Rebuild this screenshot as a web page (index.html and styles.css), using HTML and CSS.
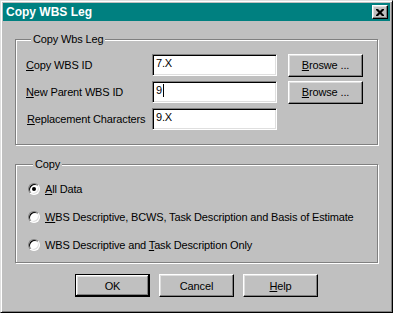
FILE: index.html
```html
<!DOCTYPE html>
<html>
    <head>
        <meta charset='utf-8'/>
        <link rel="stylesheet" href="styles.css">
    </head>
    <body>
        <div class='window'>
            <div class='titlebar'>
                <span class='title'>Copy WBS Leg</span>
                <span class='close'>
                    <svg width='8' height='7' viewBox='0 0 8 7'>
                        <path d='M0 0h2l2 2 2-2h2v1l-2.5 2.5 2.5 2.5v1h-2l-2-2-2 2h-2v-1l2.5-2.5-2.5-2.5z' fill='#000'/>
                    </svg>
                </span>
            </div>
            <div class='content'>
                <fieldset class='group group-leg'>
                    <legend>Copy Wbs Leg</legend>
                    <div class='row'>
                        <span class='field-label'><u>C</u>opy WBS ID</span>
                        <div class='textbox'>7.X</div>
                        <button class='btn'><u>B</u>roswe ...</button>
                    </div>
                    <div class='row'>
                        <span class='field-label'><u>N</u>ew Parent WBS ID</span>
                        <div class='textbox'>9<span class='caret'></span></div>
                        <button class='btn'><u>B</u>rowse ...</button>
                    </div>
                    <div class='row'>
                        <span class='field-label indent'><u>R</u>eplacement Characters</span>
                        <div class='textbox'>9.X</div>
                    </div>
                </fieldset>
                <fieldset class='group group-copy'>
                    <legend>Copy</legend>
                    <div class='option'>
                        <span class='radio checked'></span>
                        <span><u>A</u>ll Data</span>
                    </div>
                    <div class='option'>
                        <span class='radio'></span>
                        <span><u>W</u>BS Descriptive, BCWS, Task Description and Basis of Estimate</span>
                    </div>
                    <div class='option'>
                        <span class='radio'></span>
                        <span>WBS Descriptive and <u>T</u>ask Description Only</span>
                    </div>
                </fieldset>
                <div class='actions'>
                    <button class='btn btn-default'>OK</button>
                    <button class='btn'>Cancel</button>
                    <button class='btn'><u>H</u>elp</button>
                </div>
            </div>
        </div>
    </body>
</html>
```

FILE: styles.css
```css
body{
    margin:0;
    padding:0;
    font-family:"Liberation Sans", Arial, sans-serif;
    font-size:11px;
    letter-spacing:-0.15px;
    color:#000;
}
.window{
    width:393px;
    height:313px;
    box-sizing:border-box;
    background-color:#c0c0c0;
    border:1px solid;
    border-color:#dfdfdf #000 #000 #dfdfdf;
    box-shadow:inset 1px 1px #fff, inset -1px -1px #808080;
    padding:2px;
}
.titlebar{
    height:18px;
    background-color:#008080;
    display:flex;
    align-items:center;
    justify-content:space-between;
    padding:0 2px 0 3px;
}
.title{
    color:#fff;
    font-weight:bold;
    font-size:12px;
    letter-spacing:0;
}
.close{
    width:16px;
    height:14px;
    box-sizing:border-box;
    background-color:#c0c0c0;
    border:1px solid;
    border-color:#fff #000 #000 #fff;
    box-shadow:inset -1px -1px #808080, inset 1px 1px #dfdfdf;
    display:flex;
    align-items:center;
    justify-content:center;
}
.content{
    padding:12px 12px 0 12px;
}
.group{
    margin:0;
    border:1px solid #808080;
    box-shadow:inset 1px 1px #fff, 1px 1px #fff;
}
.group legend{
    background-color:#c0c0c0;
    padding:0 2px;
    margin-left:5px;
    line-height:13px;
}
.group-leg{
    padding:8px 13px 14px 10px;
    display:flex;
    flex-direction:column;
    gap:5px;
}
.row{
    display:flex;
    align-items:center;
    height:22px;
}
.field-label{
    width:126px;
}
.field-label.indent{
    padding-left:1px;
    width:125px;
}
.textbox{
    width:125px;
    height:22px;
    box-sizing:border-box;
    background-color:#fff;
    border:1px solid;
    border-color:#808080 #fff #fff #808080;
    box-shadow:inset 1px 1px #000, inset -1px -1px #dfdfdf;
    padding:2px 3px 0;
    line-height:13px;
    display:flex;
    align-items:flex-start;
}
.caret{
    width:1px;
    height:13px;
    background-color:#000;
    margin-left:1px;
}
.btn{
    width:75px;
    height:23px;
    box-sizing:border-box;
    font-family:inherit;
    font-size:11px;
    letter-spacing:inherit;
    color:#000;
    background-color:#c0c0c0;
    border:1px solid;
    border-color:#fff #000 #000 #fff;
    box-shadow:inset -1px -1px #808080, inset 1px 1px #dfdfdf;
    padding:0;
    margin-left:11px;
}
.btn-default{
    border-color:#000;
    box-shadow:inset -1px -1px #000, inset 1px 1px #fff, inset -2px -2px #808080, inset 2px 2px #dfdfdf;
}
.group-copy{
    margin-top:13px;
    padding:10px 10px 9px 12px;
    display:flex;
    flex-direction:column;
    gap:12px;
}
.option{
    display:flex;
    align-items:center;
    height:16px;
    gap:5px;
}
.radio{
    width:12px;
    height:12px;
    box-sizing:border-box;
    border-radius:50%;
    background-color:#fff;
    border:1px solid;
    border-color:#808080 #fff #fff #808080;
    box-shadow:inset 1px 1px #000, inset -1px -1px #dfdfdf;
    display:flex;
    align-items:center;
    justify-content:center;
}
.radio.checked::after{
    content:'';
    width:4px;
    height:4px;
    border-radius:50%;
    background-color:#000;
}
.actions{
    margin-top:11px;
    display:flex;
    justify-content:center;
    gap:9px;
}
.actions .btn{
    margin-left:0;
}
```
